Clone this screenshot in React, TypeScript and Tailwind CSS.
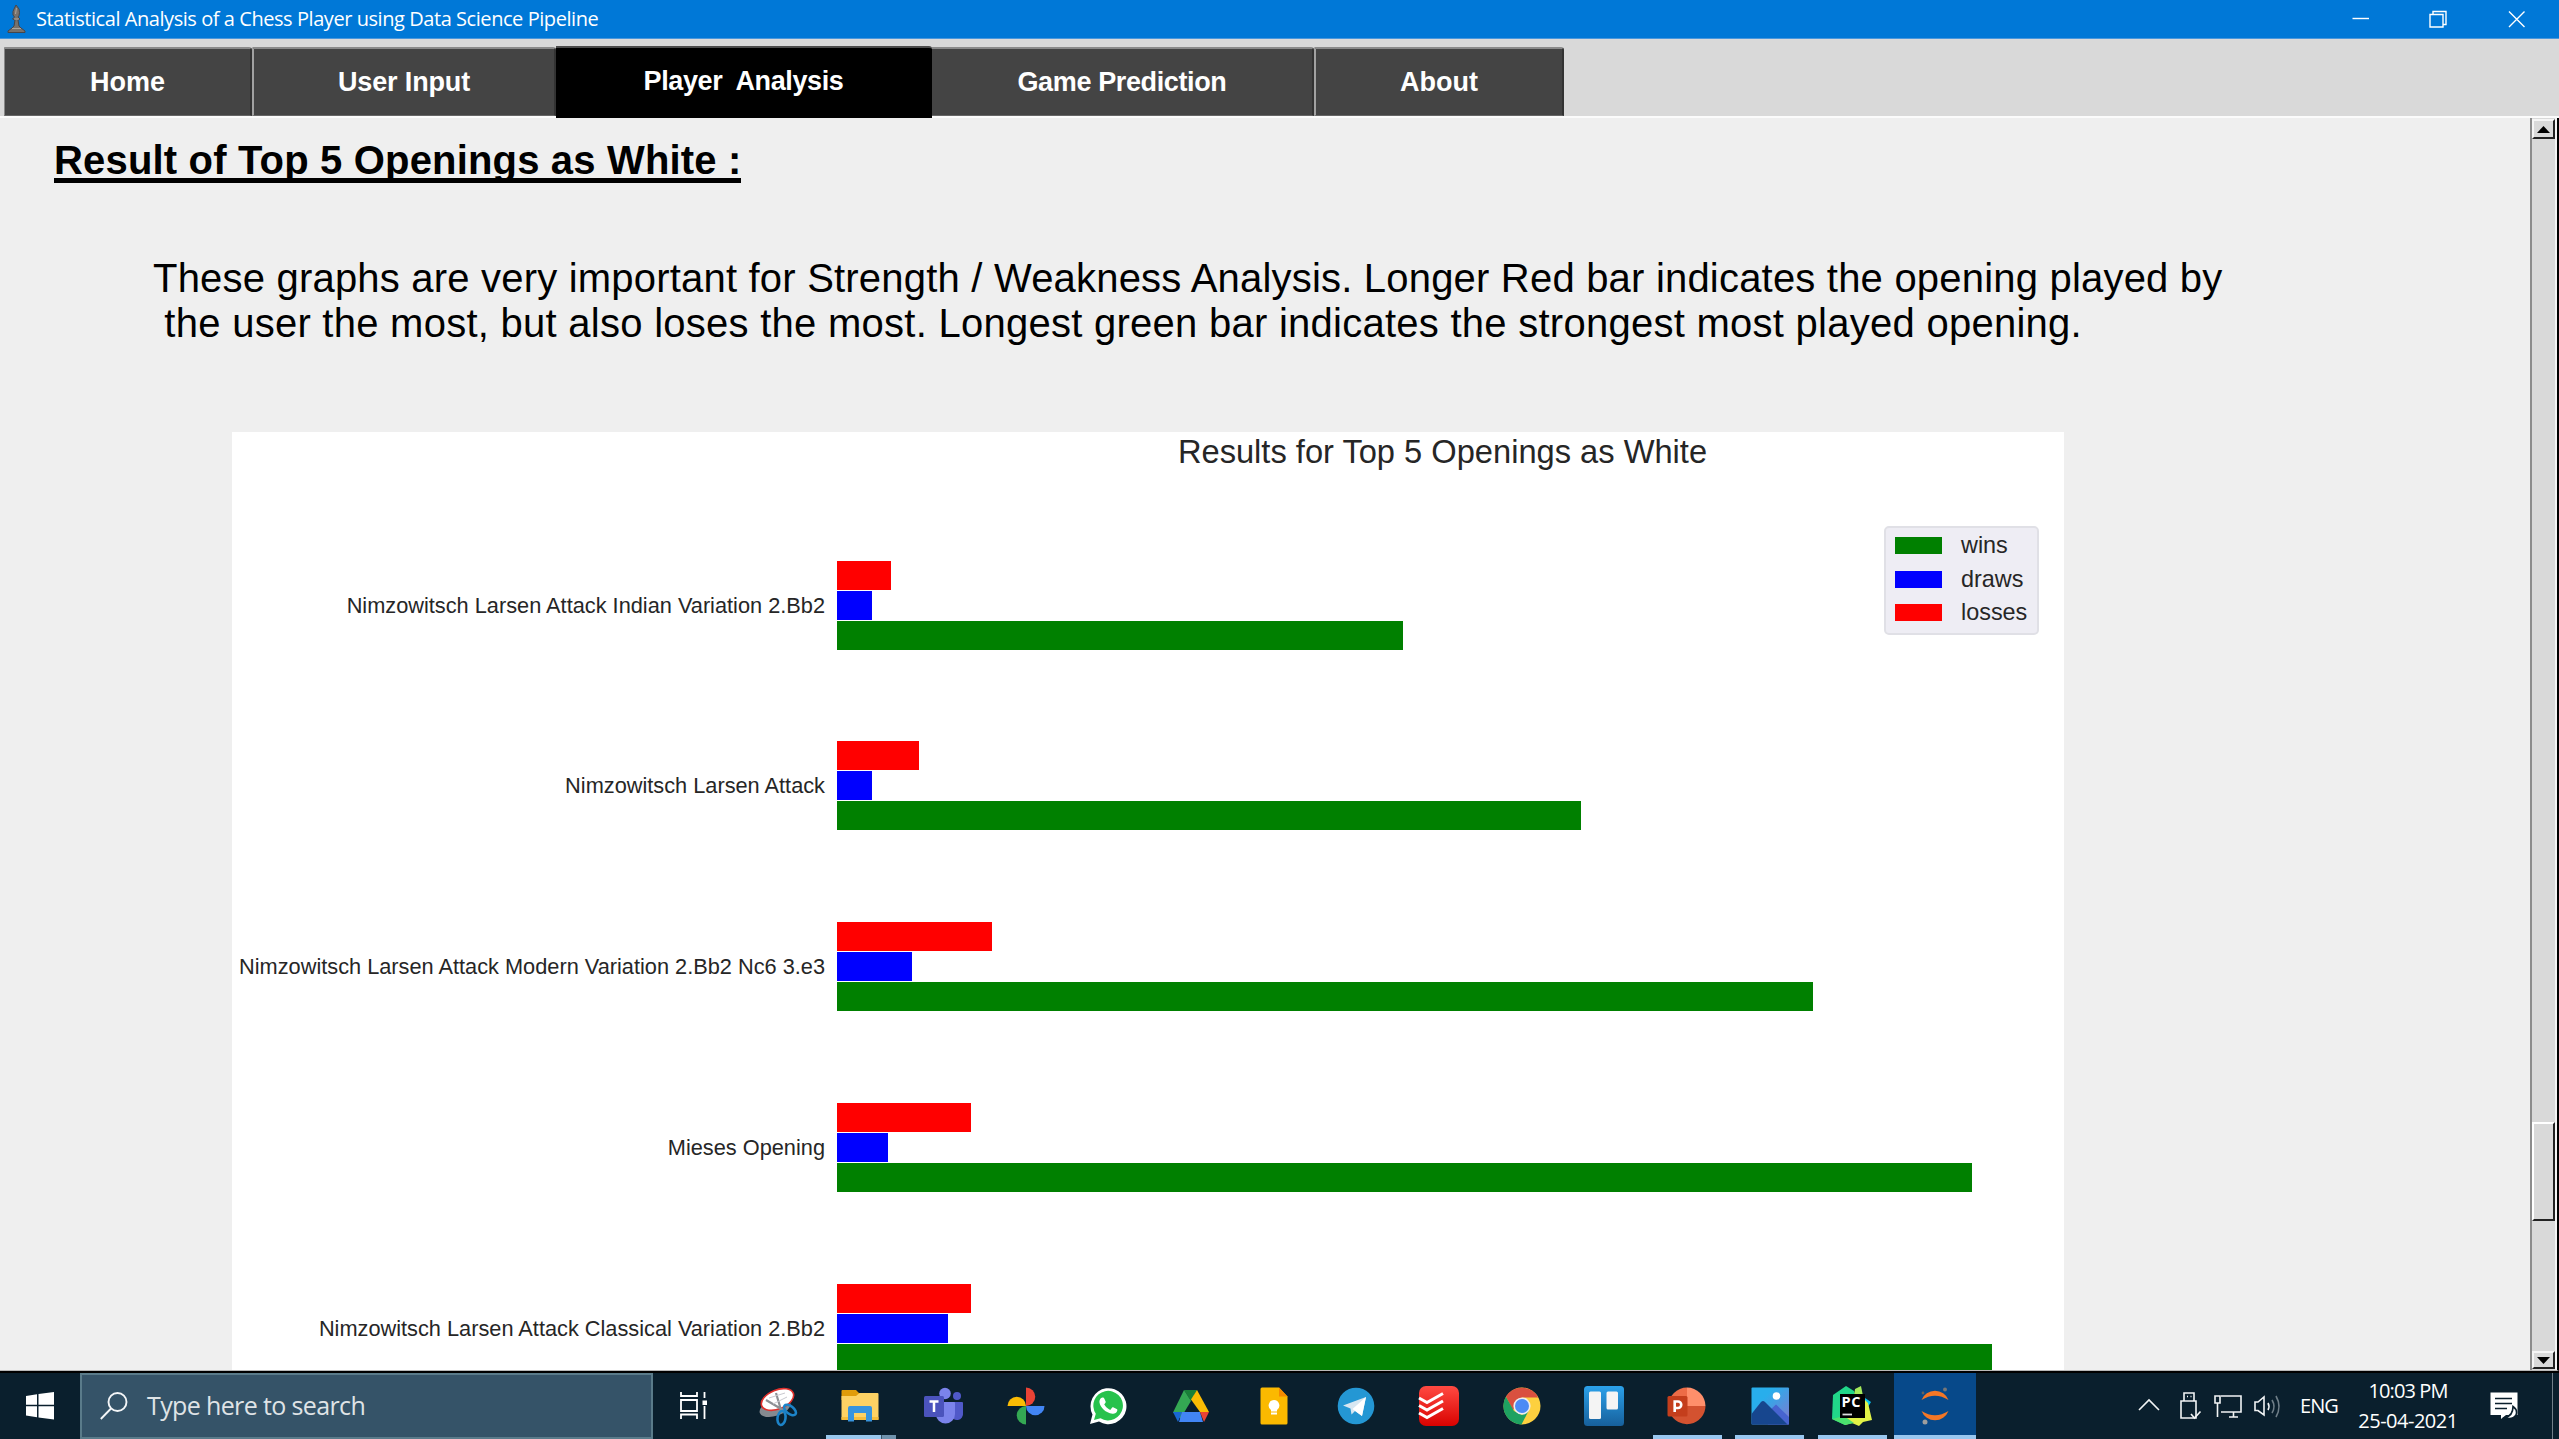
import type { ReactNode } from "react";

const openings = [
  { name: "Nimzowitsch Larsen Attack Indian Variation 2.Bb2", losses: 54, draws: 34.5, wins: 566 },
  { name: "Nimzowitsch Larsen Attack", losses: 81.5, draws: 34.5, wins: 744 },
  { name: "Nimzowitsch Larsen Attack Modern Variation 2.Bb2 Nc6 3.e3", losses: 154.5, draws: 74.5, wins: 976 },
  { name: "Mieses Opening", losses: 134, draws: 50.5, wins: 1135 },
  { name: "Nimzowitsch Larsen Attack Classical Variation 2.Bb2", losses: 134, draws: 111, wins: 1155 },
];

function TitleBar() {
  return (
    <header className="flex h-[39px] shrink-0 items-center border-b border-[#4a97dc] bg-[#0078d7] text-white">
      <svg className="ml-[7px] h-[28px] w-[19px]" viewBox="0 0 19 28">
        <path d="M9 0 L12 4 Q13 8 12 10.500 L11 12 L13 14 L11 15 L12 21 L14 23 L18 26 V27.500 H1 V26 L5 23 L7 21 L8 15 L5.500 14 L7.500 12 L6 10 Q5.500 6 7 4Z" fill="#77716c" stroke="#45464b" strokeWidth="1" />
        <path d="M9.500 3 L8.500 9 M5 23.500 H14 M7 14 H12" stroke="#aaa49d" strokeWidth="1" />
      </svg>
      <span className="ml-[10px] grow text-[20px] tracking-[-0.44px]">
        Statistical Analysis of a Chess Player using Data Science Pipeline
      </span>
      <svg className="mr-[33px] h-[18px] w-[174px]" viewBox="0 0 174 18" fill="none" stroke="#fff" strokeWidth="1.4">
        <path d="M0.500 8.500 H17" />
        <path d="M78 4.500 H91 V17 H78Z M81 4.500 V1.500 H94 V14.500 H91" />
        <path d="M157 1.500 L172.500 17 M172.500 1.500 L157 17" />
      </svg>
    </header>
  );
}

function Tab({ children, className }: { children: ReactNode; className: string }) {
  return (
    <div className={"flex h-[69px] items-center justify-center border-t-2 border-r-[2px] border-b border-t-[#8a8a8a] border-r-[#333] border-b-[#666] bg-[#444] pt-px whitespace-pre " + className}>
      {children}
    </div>
  );
}

function Tabs() {
  return (
    <nav className="flex h-[79px] shrink-0 items-end border-b-2 border-[#fbfbfb] bg-[#d9d9d9] pl-[4px] font-['Liberation_Sans',Arial,sans-serif] text-[27px] font-bold text-white">
      <Tab className="w-[248px] rounded-tr-[3px] border-l border-l-[#888]">Home</Tab>
      <Tab className="w-[304px] rounded-tr-[3px] border-l-2 border-l-[#a2a2a2] tracking-[-0.15px]">User Input</Tab>
      <div className="relative top-[2px] flex h-[72px] w-[376px] items-center justify-center rounded-tr-[3px] border-t-2 border-[#4c4c4c] bg-black pr-[1px] pb-[4px] tracking-[-0.39px] whitespace-pre">
        {"Player  Analysis"}
      </div>
      <Tab className="w-[382px] rounded-tr-[3px] tracking-[-0.37px]">Game Prediction</Tab>
      <Tab className="w-[250px] rounded-tr-[3px] border-l-2 border-l-[#a2a2a2]">About</Tab>
    </nav>
  );
}

function Legend() {
  return (
    <div className="absolute top-[94px] right-[25px] flex h-[109px] w-[155px] flex-col rounded-[5px] border-2 border-[#e0e0e6] bg-[#eeedf4] pt-[1px] pl-[9px] text-[23.4px]">
      <div className="flex h-[33.4px] items-center gap-[19px]"><span className="h-[17px] w-[47px] bg-[#008000]" />wins</div>
      <div className="flex h-[33.4px] items-center gap-[19px]"><span className="h-[17px] w-[47px] bg-[#0000ff]" />draws</div>
      <div className="flex h-[33.4px] items-center gap-[19px]"><span className="h-[17px] w-[47px] bg-[#ff0000]" />losses</div>
    </div>
  );
}

function Chart() {
  return (
    <section className="relative mt-[86px] ml-[232px] w-[1832px] grow overflow-hidden bg-white pr-[16px] text-[#262626]">
      <h2 className="ml-[605px] h-[128.500px] text-center text-[32.65px] leading-[40px]">Results for Top 5 Openings as White</h2>
      <Legend />
      {openings.map((o) => (
        <div key={o.name} className="flex h-[180.9px] items-start">
          <div className="w-[593px] shrink-0 text-right text-[21.75px] leading-[90px] whitespace-nowrap">{o.name}</div>
          <div className="ml-[12px] flex flex-col gap-px">
            <div className="h-[29px] bg-[#ff0000]" style={{ width: o.losses }} />
            <div className="h-[29px] bg-[#0000ff]" style={{ width: o.draws }} />
            <div className="h-[29px] bg-[#008000]" style={{ width: o.wins }} />
          </div>
        </div>
      ))}
    </section>
  );
}

function Scrollbar() {
  return (
    <div className="flex w-[27px] shrink-0 flex-col border-r-[2px] border-l-2 border-r-[#f4f4f4] border-l-[#8c8c8c] bg-[#d9d9d9] pt-px">
      <div className="flex h-[20px] items-center justify-center border-2 border-t-[#f5f5f5] border-r-[#222] border-b-[#222] border-l-[#f5f5f5]">
        <svg className="h-[7px] w-[13px]" viewBox="0 0 13 7"><path d="M0 7 L6.500 0 L13 7Z" fill="#000" /></svg>
      </div>
      <div className="mt-[983px] h-[99px] border-2 border-t-white border-r-[#222] border-b-[#222] border-l-white" />
      <div className="mt-[130px] flex h-[18px] items-center justify-center border-2 border-t-[#f5f5f5] border-r-[#222] border-b-[#222] border-l-[#f5f5f5]">
        <svg className="h-[7px] w-[13px]" viewBox="0 0 13 7"><path d="M0 0 L6.500 7 L13 0Z" fill="#000" /></svg>
      </div>
    </div>
  );
}

const Snip = (
  <>
    <ellipse cx="21" cy="26" rx="16" ry="8" transform="rotate(-18 21 26)" fill="#858a90" />
    <ellipse cx="23.500" cy="17.500" rx="17" ry="9.500" transform="rotate(-22 23.500 17.500)" fill="#fff" stroke="#e0302c" strokeWidth="1.600" />
    <path d="M12 18 L29 28 M22 11 L27 28" stroke="#8d9094" strokeWidth="2.200" />
    <path d="M15 16 L31 11 M19 22 L33 15" stroke="#c9c9cf" strokeWidth="1" />
    <g fill="none" stroke="#1c83c8" strokeWidth="2.600">
      <ellipse cx="36" cy="28" rx="7" ry="3.800" transform="rotate(38 36 28)" />
      <ellipse cx="27.500" cy="36" rx="4" ry="7" transform="rotate(8 27.500 36)" />
    </g>
  </>
);
const Explorer = (
  <>
    <path d="M5.500 9 a1 1 0 0 1 1-1 H20 l3.500 3.500 H42 V18 H5.500Z" fill="#e09c0a" />
    <path d="M5.500 14 H20 l3.500-3 H41.500 a1 1 0 0 1 1 1 V37 a1 1 0 0 1-1 1 H6.500 a1 1 0 0 1-1-1Z" fill="#fdd264" />
    <path d="M5.500 35 H42.500 V38 H5.500Z" fill="#f5bd3b" />
    <path d="M12 39.500 V26 a2 2 0 0 1 2-2 H34 a2 2 0 0 1 2 2 V39.500 H30 V31 H18 V39.500Z" fill="#3794de" />
  </>
);
const Teams = (
  <>
    <circle cx="38" cy="14" r="4" fill="#5059c9" />
    <path d="M32 20 H43 a1 1 0 0 1 1 1 V31 a6 6 0 0 1-12 2Z" fill="#5059c9" />
    <circle cx="26" cy="11.500" r="5.800" fill="#7b83eb" />
    <path d="M17 20 H35 a1 1 0 0 1 1 1 V32 a9.500 9.500 0 0 1-19 0Z" fill="#7b83eb" />
    <rect x="5" y="14" width="20" height="21" rx="1.500" fill="#4b53bc" />
    <path d="M10.500 19.500 H19.500 M15 19.500 V30" stroke="#fff" strokeWidth="2.500" />
  </>
);
const GooglePhotos = (
  <>
    <path d="M24 5.500 A9.200 9.200 0 0 1 24 24Z" fill="#ea4335" />
    <path d="M42.500 24 A9.200 9.200 0 0 1 24 24Z" fill="#4285f4" />
    <path d="M24 42.500 A9.200 9.200 0 0 1 24 24Z" fill="#34a853" />
    <path d="M5.500 24 A9.200 9.200 0 0 1 24 24Z" fill="#fbbc04" />
  </>
);
const WhatsApp = (
  <>
    <path d="M6 42 L8.500 32.500 A18 18 0 1 1 15 39.500Z" fill="#fff" />
    <path d="M10 38 L11.800 31.800 A14.800 14.800 0 1 1 16.500 36.300Z" fill="#27c24c" />
    <path d="M18.500 15.500 c1 0 1.500.3 1.900 1.200 l1.300 3 c.3.700-.8 1.900-1.500 2.600 1.300 2.600 3.200 4.400 6 5.600 l2-2.300 c.4-.4.900-.4 1.400-.1 l3 1.500 c.8.400.9.800.7 1.600 -.5 2.300-2.900 3.500-4.900 3.200 -6.600-.9-12.100-6.300-12.900-11.300 -.3-2.200 1-4.800 3-5Z" fill="#fff" />
  </>
);
const Drive = (
  <>
    <path d="M17 8 H30 L24 19Z" fill="#188038" />
    <path d="M17 8 L24 19 L13.500 36.500 L6 30.500Z" fill="#34a853" />
    <path d="M30 8 L42 30 H33 L24 17.500Z" fill="#fbbc04" />
    <path d="M15 30 H33 L36 40 H12Z" fill="#4285f4" />
    <path d="M6 30 H15 L11 40Z" fill="#1967d2" />
    <path d="M33 30 H42 L37 40Z" fill="#ea4335" />
  </>
);
const Keep = (
  <>
    <path d="M12 5.500 H29 L37.500 14.500 V41 a1.500 1.500 0 0 1-1.500 1.500 H12 a1.500 1.500 0 0 1-1.500-1.500 V7 a1.500 1.500 0 0 1 1.500-1.500Z" fill="#fbb900" />
    <path d="M29 5.500 L37.500 14.500 H29Z" fill="#f58a00" />
    <path d="M24 18 a5.500 5.500 0 0 1 3 10 V29.500 H21 V28 A5.500 5.500 0 0 1 24 18Z" fill="#fff" />
    <path d="M21 31.500 H27" stroke="#fff" strokeWidth="2" />
  </>
);
const Telegram = (
  <>
    <circle cx="24" cy="24" r="18.300" fill="#2497d4" />
    <path d="M11 23.500 L34 15 L30 34 L23 29 L19.500 32.500 L18.500 26.500Z" fill="#d7e6f1" />
    <path d="M11 23.500 L34 15 L20.500 27 L30 34 L34 15Z" fill="#fff" />
  </>
);
const Todoist = (
  <>
    <rect x="4" y="4" width="40" height="40" rx="7" fill="url(#todoistRed)" />
    <path d="M4 16 L12 20.500 L28 11.500 M4 23.500 L12 28 L28 19 M4 31 L12 35.500 L28 26.500" fill="none" stroke="#fff" strokeWidth="3" />
  </>
);
const Chrome = (
  <>
    <circle cx="24" cy="24" r="18.500" fill="#fdd03f" />
    <path d="M7.900 14.800 A18.500 18.500 0 0 1 40.200 15.500 H24 L15 28Z" fill="#d9503f" />
    <path d="M7.900 14.800 L16 29 L24 33 L31 28 L23.500 42.500 A18.500 18.500 0 0 1 7.900 14.800Z" fill="#1ea261" />
    <circle cx="24" cy="24" r="8.600" fill="#eee" />
    <circle cx="24" cy="24" r="7" fill="#4c8bf5" />
  </>
);
const Trello = (
  <>
    <rect x="4" y="4" width="40" height="40" rx="3.500" fill="url(#trelloBlue)" />
    <rect x="9" y="9.500" width="12" height="27.500" rx="1.500" fill="#f4f4f4" />
    <rect x="26.500" y="9.500" width="11.500" height="18" rx="1.500" fill="#f4f4f4" />
  </>
);
const PowerPoint = (
  <>
    <path d="M24 5.500 A18.500 18.500 0 0 0 5.500 24 L24 27Z" fill="#ed6c47" />
    <path d="M24 5.500 A18.500 18.500 0 0 1 42.500 24 L24 25Z" fill="#ff8f6b" />
    <path d="M42.500 24 A18.500 18.500 0 0 1 7 31 L7 24Z" fill="#d35230" />
    <rect x="4.500" y="14" width="20" height="20.500" rx="1.500" fill="#c43e1c" />
    <path d="M11.700 30 V19.500 H15 a3.200 3.200 0 0 1 0 6.500 H12" fill="none" stroke="#fff" strokeWidth="2.600" />
  </>
);
const Photos = (
  <>
    <rect x="5.500" y="5.500" width="37.500" height="37" rx="1" fill="url(#photosSky)" />
    <path d="M22 30 L30 22.500 L43 35 V42.500 H22Z" fill="#4764d0" />
    <path d="M5.500 32 L15 20 Q17 18 19 20 L41.500 42.500 H5.500Z" fill="#17468e" />
    <circle cx="30.500" cy="14" r="3.800" fill="#fff" />
  </>
);
const PyCharm = (
  <>
    <path d="M5 13 L18 4 L26 9 L30 22 L17 43 L4 37Z" fill="#21d789" />
    <path d="M27 7 L33 4 L35 14 L26 14Z" fill="#a5ea5a" />
    <path d="M34 14 L43 20 L38 28Z" fill="#07c3f2" />
    <path d="M17 43 L16 34 L37 18 L40 21 L44 38 L35 40 L31 44 L24 41Z" fill="#e2f346" />
    <path d="M4 37 L16 34 L26 41 L17 43Z" fill="#4be06e" />
    <rect x="12" y="12" width="25" height="24" fill="#000" />
    <path d="M14.500 32.500 H24" stroke="#ddd" strokeWidth="1.800" />
    <text x="13.500" y="24.500" fontSize="14.500" fontWeight="700" fill="#fff" fontFamily="'Open Sans', sans-serif" textLength="19">PC</text>
  </>
);
const Jupyter = (
  <>
    <path d="M10.500 18 A14.500 14.500 0 0 1 37.500 18 Q24 9.500 10.500 18Z" fill="#f37726" />
    <path d="M10.500 29 A14.500 14.500 0 0 0 37.500 29 Q24 37.500 10.500 29Z" fill="#f37726" />
    <circle cx="34" cy="7.500" r="2" fill="#767677" />
    <circle cx="12" cy="11" r="1.400" fill="#616262" />
    <circle cx="14" cy="40" r="2.500" fill="#9e9e9e" />
  </>
);

const apps: { id: string; art: ReactNode; state?: "group" | "open" | "active" }[] = [
  { id: "snip", art: Snip },
  { id: "explorer", art: Explorer, state: "group" },
  { id: "teams", art: Teams },
  { id: "gphotos", art: GooglePhotos },
  { id: "whatsapp", art: WhatsApp },
  { id: "drive", art: Drive },
  { id: "keep", art: Keep },
  { id: "telegram", art: Telegram },
  { id: "todoist", art: Todoist },
  { id: "chrome", art: Chrome },
  { id: "trello", art: Trello },
  { id: "powerpoint", art: PowerPoint, state: "open" },
  { id: "photos", art: Photos, state: "open" },
  { id: "pycharm", art: PyCharm, state: "open" },
  { id: "jupyter", art: Jupyter, state: "active" },
];

function Taskbar() {
  return (
    <footer className="flex h-[68px] shrink-0 border-t-2 border-black bg-[#0a1f2d] text-white">
      <svg className="mt-[19px] ml-[26px] h-[28px] w-[28px]" viewBox="0 0 28 28" fill="#fff">
        <path d="M0 4 L11 2.200 V12.800 H0Z M12.500 2 L28 0 V12.800 H12.500Z M0 14.300 H11 V25.300 L0 23.500Z M12.500 14.300 H28 V27.500 L12.500 25.500Z" />
      </svg>
      <div className="ml-[26px] flex h-[66px] w-[573px] items-center border-2 border-[#5a7b8a] bg-[#355368]">
        <svg className="ml-[18px] h-[28px] w-[28px]" viewBox="0 0 28 28" fill="none" stroke="#f4f6f8" strokeWidth="1.900">
          <circle cx="17.500" cy="10" r="9" />
          <path d="M11 16.500 L0.800 27" />
        </svg>
        <span className="ml-[19px] text-[25px] tracking-[-0.63px] text-[#dfe3e6]">Type here to search</span>
      </div>
      <svg className="mt-[19px] ml-[27px] h-[27px] w-[55px]" viewBox="0 0 55 27" fill="none" stroke="#fff" strokeWidth="1.800">
        <path d="M1 0 V4 H17 V0 M1 8 H17 V19 H1Z M1 27 V22.500 H17 V27 M24.500 0 V6 M24.500 14 V27" />
        <rect x="22.500" y="8.500" width="4.500" height="4.500" fill="#fff" stroke="none" />
      </svg>
      <svg className="absolute h-0 w-0">
        <defs>
          <linearGradient id="todoistRed" x1="0" y1="0" x2="0" y2="1"><stop offset="0" stopColor="#ff4a42" /><stop offset="1" stopColor="#d90200" /></linearGradient>
          <linearGradient id="trelloBlue" x1="0" y1="0" x2="0" y2="1"><stop offset="0" stopColor="#2ba1ea" /><stop offset="1" stopColor="#17609c" /></linearGradient>
          <linearGradient id="photosSky" x1="0" y1="0" x2="1" y2="1"><stop offset="0.300" stopColor="#28aeec" /><stop offset="1" stopColor="#8377cf" /></linearGradient>
        </defs>
      </svg>
      <div className="ml-[1.500px] flex">
        {apps.map((a) => (
          <div key={a.id} className={"relative flex w-[82.67px] items-center justify-center " + (a.state === "active" ? "bg-[#07498a]" : "")}>
            <svg className="h-[48px] w-[48px]" viewBox="0 0 48 48">{a.art}</svg>
            {a.state === "group" && (
              <div className="absolute bottom-0 left-[7px] flex h-[4px] w-[70px] bg-[#99c7ed]"><div className="ml-auto w-[15px] border-l border-[#3c5567] bg-[#6f92ad]" /></div>
            )}
            {a.state === "open" && <div className="absolute bottom-0 left-[7px] h-[4px] w-[69px] bg-[#99c7f0]" />}
            {a.state === "active" && <div className="absolute bottom-0 left-0 h-[4px] w-full bg-[#99c7f0]" />}
          </div>
        ))}
      </div>
      <div className="ml-auto flex items-center text-[20px]">
        <svg className="h-[30px] w-[145px]" viewBox="0 0 145 30" fill="none" stroke="#f2f4f5" strokeWidth="1.600">
          <path d="M1 19 L11 9 L21 19" />
          <path d="M46 10 V2 H56 V10 M43 10 H58 V27 H43Z M49 5.500 h1 M52.500 5.500 h1" />
          <path d="M53 23 L56.500 27 L62.500 20.500" />
          <path d="M83 5 H103 V21 H83 M91 26 H100 M95.500 21 V26 M77 5 h5 v7 h-5Z M79.500 12 V26" />
          <path d="M117 11 H120 L126 6 V24 L120 19.500 H117Z" />
          <path d="M130 12 Q132 15.500 130 19" />
          <path d="M134 9 Q138 15.500 134 22 M138 5 Q144 15.500 138 26" stroke="#6f7e88" />
        </svg>
        <span className="ml-[17px] w-[40px] tracking-[-0.9px]">ENG</span>
        <div className="ml-[16px] w-[104px] text-center leading-[30px]">
          <div className="tracking-[-0.9px]">10:03 PM</div>
          <div className="tracking-[-0.5px]">25-04-2021</div>
        </div>
        <svg className="ml-[30px] h-[28px] w-[28px]" viewBox="0 0 28 28">
          <path d="M0.500 0.500 H27.500 V23 H16 L11 27 V23 H0.500Z" fill="#fff" />
          <path d="M5 6.500 H22 M5 11.500 H22 M5 16.500 H17" stroke="#0a1f2d" strokeWidth="1.700" />
          <path d="M23 14.500 Q28 18 26 23 Q22 28.500 15 25.500 Q23 24 23 14.500Z" fill="#fff" stroke="#0a1f2d" strokeWidth="1.600" />
        </svg>
        <div className="ml-[34px] h-full w-[7px] border-l border-[#72808a]" />
      </div>
    </footer>
  );
}

export default function App() {
  return (
    <div className="flex h-[1439px] w-[2559px] flex-col overflow-hidden bg-[#efefef] font-['Open_Sans','Noto_Sans',sans-serif]">
      <TitleBar />
      <Tabs />
      <div className="flex h-[1253px] shrink-0 border-r-[2px] border-b border-r-black border-b-[#b8b8b8]">
        <main className="flex grow flex-col font-['Liberation_Sans',Arial,sans-serif] text-black">
          <h1 className="mt-[19px] ml-[54px] box-content h-[41px] w-[687px] shrink-0 border-b-[5px] border-black text-[40px] leading-[46px] font-bold tracking-[0.17px] whitespace-nowrap">
            Result of Top 5 Openings as White :
          </h1>
          <div className="mt-[73px] ml-[153px] text-[40px] leading-[45px] whitespace-pre">
            <p className="tracking-[0.2px]">These graphs are very important for Strength / Weakness Analysis. Longer Red bar indicates the opening played by</p>
            <p className="tracking-[0.26px]">{" the user the most, but also loses the most. Longest green bar indicates the strongest most played opening."}</p>
          </div>
          <Chart />
        </main>
        <Scrollbar />
      </div>
      <Taskbar />
    </div>
  );
}
